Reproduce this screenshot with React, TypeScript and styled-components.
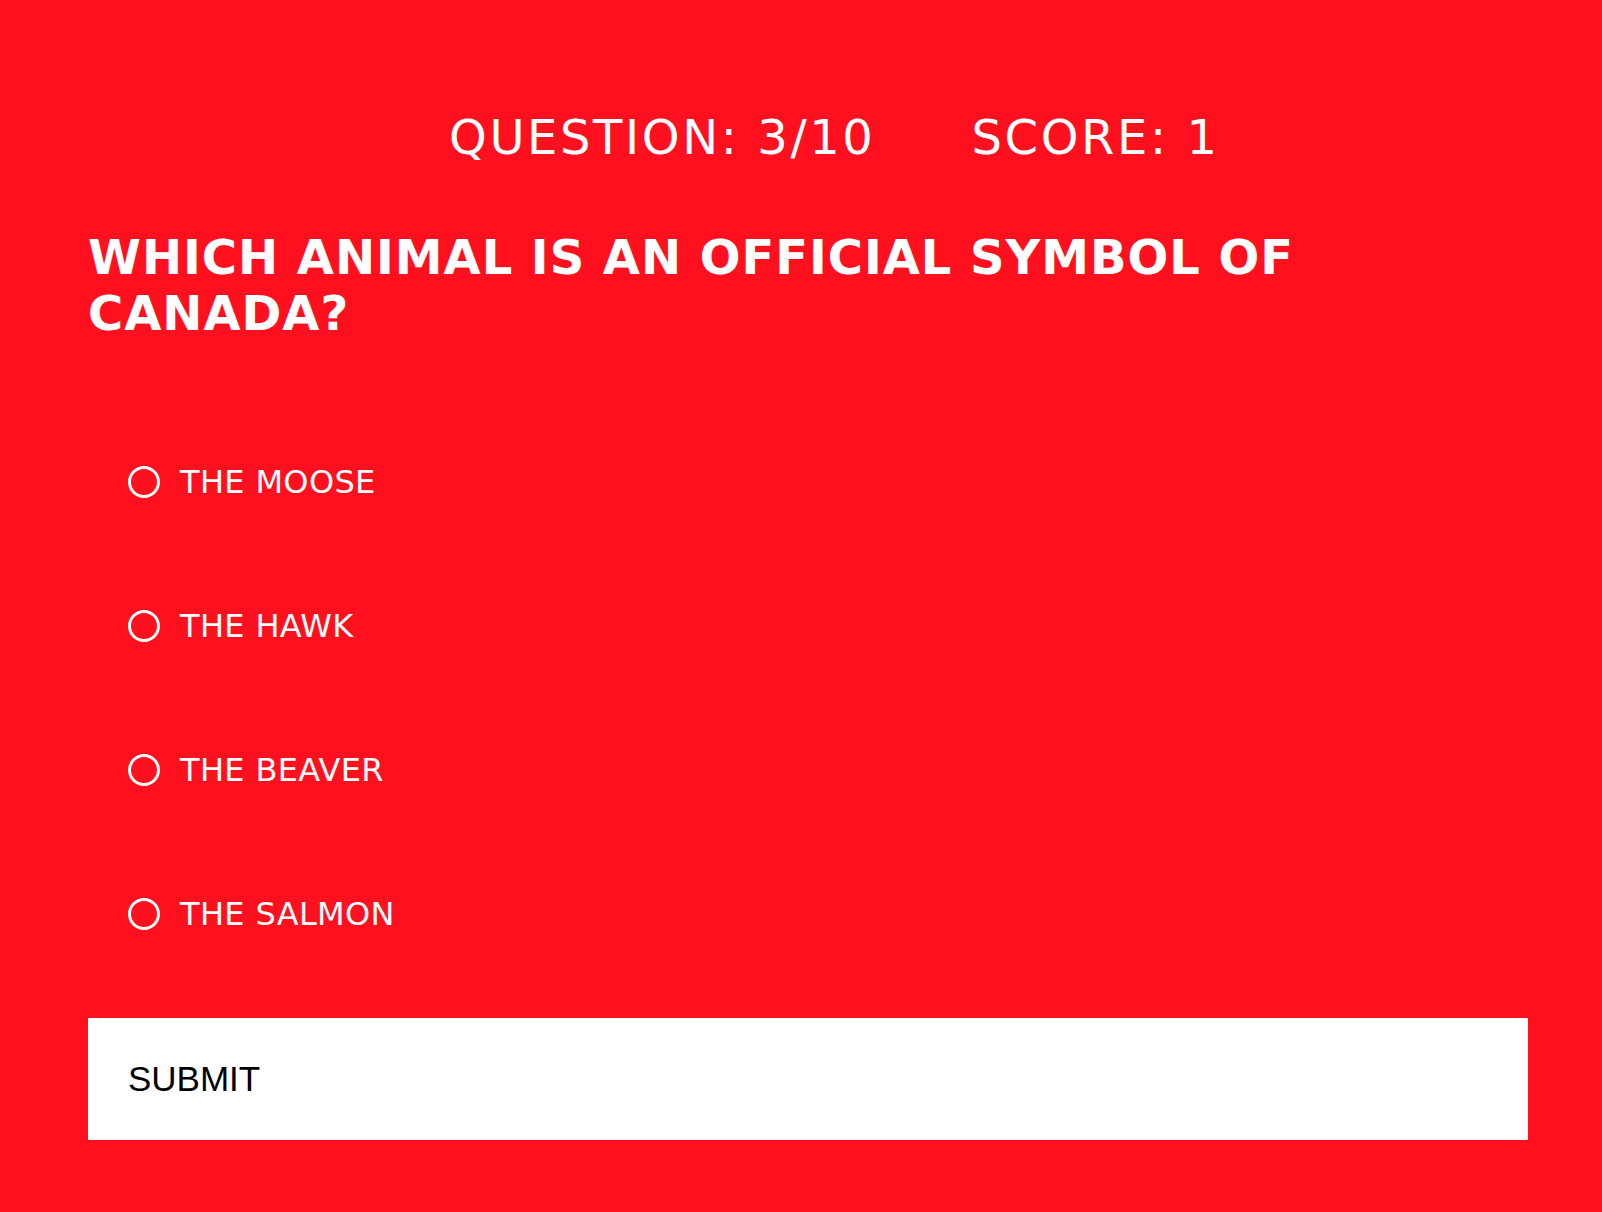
import styled, { createGlobalStyle } from 'styled-components'

const GlobalStyle = createGlobalStyle`
  html, body {
    margin: 0;
    padding: 0;
    background-color: #fe101f;
  }
  body {
    font-family: 'DejaVu Sans', Verdana, sans-serif;
    min-height: 100vh;
  }
`

const answers = ['THE MOOSE', 'THE HAWK', 'THE BEAVER', 'THE SALMON']

const Quiz = () => {
  return (
    <PageStyle>
      <GlobalStyle />
      <div className="quiz-container">
        <div className="quiz-status">
          <span className="status-item">QUESTION: 3/10</span>
          <span className="status-item">SCORE: 1</span>
        </div>
        <h1 className="question-title">WHICH ANIMAL IS AN OFFICIAL SYMBOL OF CANADA?</h1>
        <ul className="answer-list">
          {answers.map((item: string, index: number) => (
            <li key={index} className="answer-item">
              <span className="answer-radio" />
              <span className="answer-label">{item}</span>
            </li>
          ))}
        </ul>
        <button className="submit-button">SUBMIT</button>
      </div>
    </PageStyle>
  )
}

export default Quiz

const PageStyle = styled.div`
  min-height: 100vh;
  background-color: #fe101f;
  color: white;
  padding-top: 109px;
  box-sizing: border-box;

  .quiz-container {
    margin-left: 88px;
    width: 1440px;
  }

  .quiz-status {
    display: flex;
    gap: 96px;
    padding-left: 361px;
    font-size: 48px;
    letter-spacing: 2.6px;
    line-height: normal;
  }

  .question-title {
    margin: 64px 0 0 0;
    font-size: 48px;
    font-weight: bold;
    letter-spacing: 0.95px;
    line-height: normal;
  }

  .answer-list {
    list-style: none;
    margin: 69px 0 0 0;
    padding: 0;

    .answer-item {
      height: 144px;
      display: flex;
      align-items: center;
      padding-left: 40px;
      gap: 20px;
    }

    .answer-radio {
      width: 32px;
      height: 32px;
      box-sizing: border-box;
      border: 3.5px solid white;
      border-radius: 50%;
      flex-shrink: 0;
    }

    .answer-label {
      font-size: 32px;
      letter-spacing: 0.35px;
    }
  }

  .submit-button {
    display: flex;
    align-items: center;
    margin-top: 32px;
    width: 100%;
    height: 122px;
    padding: 0 0 0 40px;
    border: none;
    background-color: white;
    color: black;
    font-family: 'Liberation Sans', Arial, sans-serif;
    font-size: 35px;
    text-align: left;
    cursor: pointer;
  }
`
